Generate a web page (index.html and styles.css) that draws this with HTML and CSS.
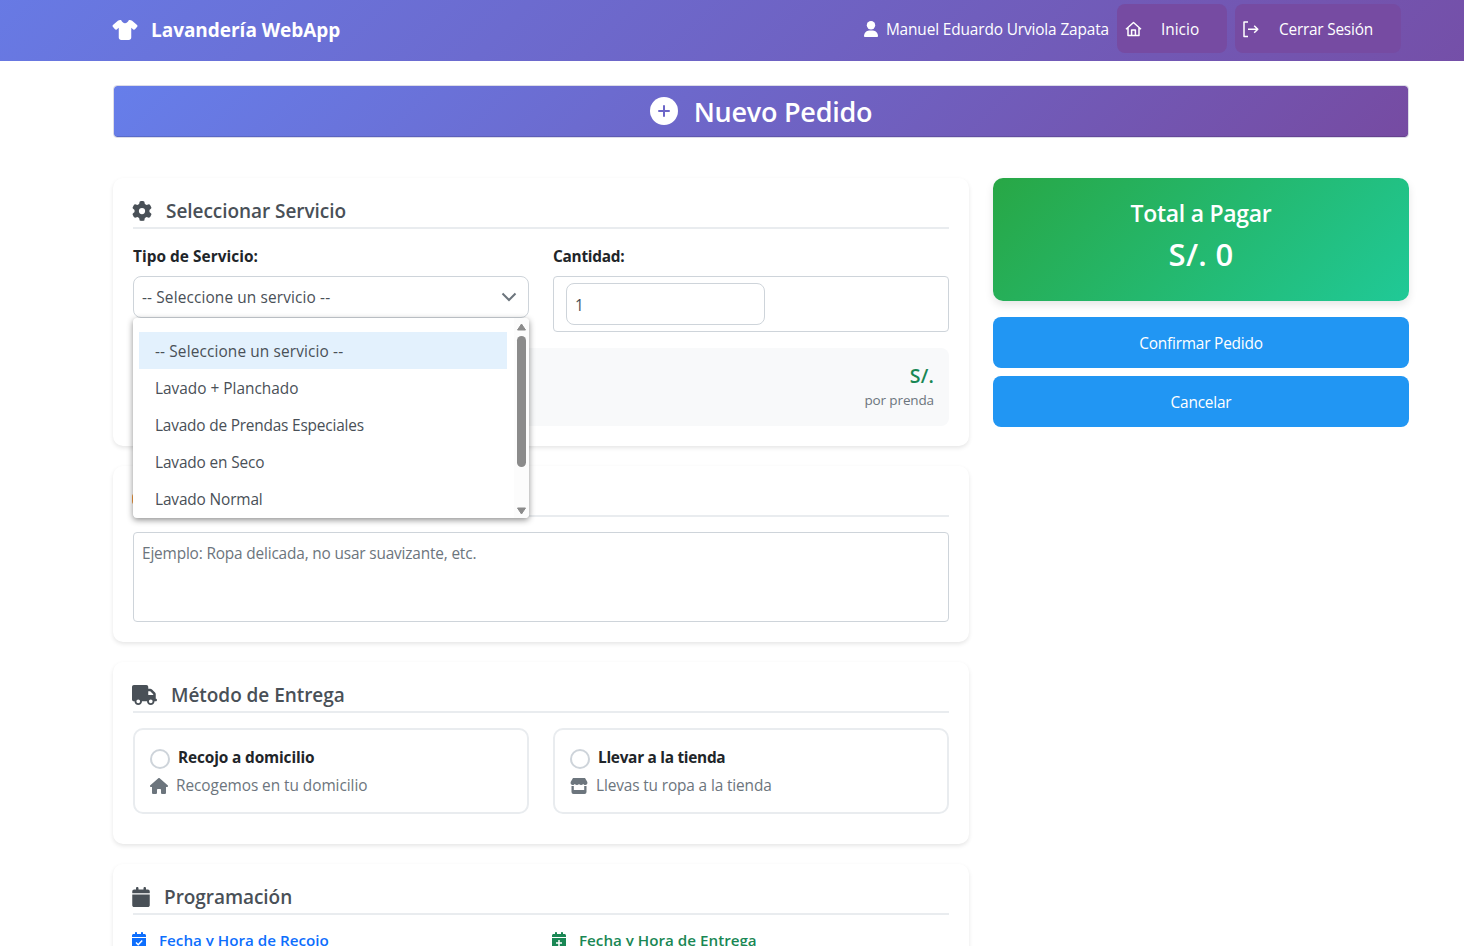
FILE: index.html
```html
<!DOCTYPE html>
<html lang="es">
<head>
<meta charset="utf-8">
<title>Nuevo Pedido - Lavandería WebApp</title>
<link rel="stylesheet" href="styles.css">
</head>
<body>
<svg class="defs" aria-hidden="true">
  <symbol id="calendar" viewBox="0 0 448 512"><path d="M96 32V64H48C21.5 64 0 85.5 0 112v48H448V112c0-26.5-21.5-48-48-48H352V32c0-17.7-14.3-32-32-32s-32 14.3-32 32V64H160V32c0-17.7-14.3-32-32-32S96 14.3 96 32zM448 192H0V464c0 26.5 21.5 48 48 48H400c26.5 0 48-21.5 48-48V192z"/></symbol>
</svg>
<header class="navbar">
  <a class="brand">
    <svg width="26" height="20" viewBox="0 0 640 512"><path d="M211.8 0c7.8 0 14.3 5.7 16.7 13.2C240.8 51.9 277.1 80 320 80s79.2-28.1 91.5-66.8C413.9 5.7 420.4 0 428.2 0h12.6c22.5 0 44.2 7.9 61.5 22.3L628.5 127.4c6.6 5.5 10.7 13.5 11.4 22.1s-2.1 17.1-7.8 23.6l-56 64c-11.4 13.1-31.2 14.6-44.6 3.5L480 197.7V448c0 35.3-28.7 64-64 64H224c-35.3 0-64-28.7-64-64V197.7l-51.5 42.9c-13.3 11.1-33.1 9.6-44.6-3.5l-56-64c-5.7-6.5-8.5-15-7.8-23.6s4.8-16.6 11.4-22.1L137.7 22.3C155 7.9 176.7 0 199.2 0h12.6z"/></svg>
    <span class="t brand-name">Lavandería WebApp</span>
  </a>
  <nav class="nav-right">
    <svg class="user-icon" width="14" height="16" viewBox="0 0 14 16"><circle cx="7" cy="4.2" r="4.2"/><path d="M0.6 15.9C0.2 15.9 0 15.6 0 15.1 0 11.8 2.4 9.6 5 9.4H9C11.600 9.6 14 11.800 14 15.100 14 15.600 13.800 15.900 13.400 15.900Z"/></svg>
    <span class="t user-name">Manuel Eduardo Urviola Zapata</span>
    <a class="nav-btn home">
      <svg width="17" height="16" viewBox="0 0 17 16" class="line"><path d="M1 8.2 8.500 1.500 16 8.200M3 7V14.600H14V7M6.600 14.600V9H10.400V14.600"/></svg>
      <span class="t">Inicio</span>
    </a>
    <a class="nav-btn logout">
      <svg width="17" height="17" viewBox="0 0 17 17" class="line"><path d="M5 1H1V15.600H5M5 8.300H15M11.200 4.800 14.800 8.300 11.200 11.800"/></svg>
      <span class="t">Cerrar Sesión</span>
    </a>
  </nav>
</header>
<main class="page">
  <h1 class="banner">
    <svg width="28" height="28" viewBox="0 0 28 28"><circle cx="14" cy="14" r="14" fill="#fff"/><path d="M14 9V19M9 14H19" stroke="#6c66c8" stroke-width="2" stroke-linecap="round"/></svg>
    <span class="t">Nuevo Pedido</span>
  </h1>
  <div class="columns">
    <div class="main-col">
      <section class="card service">
        <h2 class="title">
          <svg width="20" height="20" viewBox="0 0 512 512"><path d="M495.9 166.6c3.2 8.700 .5 18.400-6.400 24.600l-43.300 39.400c1.100 8.300 1.700 16.800 1.700 25.400s-.6 17.100-1.700 25.400l43.300 39.400c6.900 6.200 9.600 15.900 6.400 24.600c-4.400 11.900-9.700 23.300-15.800 34.300l-4.700 8.100c-6.600 11-14 21.400-22.100 31.200c-5.900 7.200-15.700 9.600-24.500 6.800l-55.700-17.700c-13.400 10.300-28.200 18.900-44 25.400l-12.500 57.100c-2 9.100-9 16.300-18.200 17.800c-13.800 2.300-28 3.500-42.500 3.500s-28.700-1.200-42.500-3.500c-9.200-1.500-16.200-8.700-18.200-17.800l-12.500-57.100c-15.800-6.500-30.600-15.100-44-25.400L83.100 425.900c-8.800 2.800-18.600 .3-24.500-6.800c-8.100-9.800-15.500-20.200-22.100-31.200l-4.700-8.100c-6.100-11-11.400-22.400-15.800-34.300c-3.200-8.700-.5-18.400 6.400-24.600l43.300-39.400C64.600 273.100 64 264.600 64 256s.6-17.100 1.700-25.400L22.400 191.200c-6.900-6.200-9.600-15.900-6.400-24.600c4.400-11.900 9.700-23.300 15.800-34.300l4.700-8.100c6.600-11 14-21.400 22.100-31.200c5.900-7.200 15.700-9.600 24.500-6.800l55.700 17.700c13.400-10.300 28.200-18.900 44-25.400l12.500-57.100c2-9.100 9-16.300 18.200-17.800C227.300 1.200 241.500 0 256 0s28.700 1.200 42.500 3.500c9.200 1.500 16.200 8.700 18.200 17.800l12.500 57.100c15.800 6.500 30.600 15.100 44 25.400l55.700-17.700c8.800-2.800 18.600-.3 24.500 6.800c8.100 9.800 15.500 20.200 22.100 31.200l4.700 8.100c6.100 11 11.400 22.400 15.800 34.300zM256 336a80 80 0 1 0 0-160 80 80 0 1 0 0 160z"/></svg>
          <span class="t">Seleccionar Servicio</span>
        </h2>
        <div class="grid fields">
          <div class="field">
            <label class="label"><span class="t kind">Tipo de Servicio:</span></label>
            <div class="select">
              <span class="t wide">-- Seleccione un servicio --</span>
              <svg class="chevron" width="16" height="10" viewBox="0 0 16 10"><path d="M1.500 1.500 8 8 14.500 1.500" fill="none" stroke="#6c757d" stroke-width="2"/></svg>
              <div class="dropdown">
                <ul class="options">
                  <li class="active"><span class="t wide">-- Seleccione un servicio --</span></li>
                  <li><span class="t plus">Lavado + Planchado</span></li>
                  <li><span class="t special">Lavado de Prendas Especiales</span></li>
                  <li><span class="t">Lavado en Seco</span></li>
                  <li><span class="t">Lavado Normal</span></li>
                </ul>
                <div class="scrollbar">
                  <svg width="10" height="8" viewBox="0 0 10 8"><path d="M5 1 9 7H1Z" stroke="#8b8b8b" stroke-linejoin="round"/></svg>
                  <div class="thumb"></div>
                  <svg width="10" height="8" viewBox="0 0 10 8"><path d="M5 7 9 1H1Z" stroke="#8b8b8b" stroke-linejoin="round"/></svg>
                </div>
              </div>
            </div>
          </div>
          <div class="field">
            <label class="label tight"><span class="t">Cantidad:</span></label>
            <div class="qty"><div class="qty-input"><span class="t">1</span></div></div>
          </div>
        </div>
        <div class="price">
          <div class="price-value"><span class="t">S/.</span></div>
          <div class="price-unit"><span class="t">por prenda</span></div>
        </div>
      </section>
      <section class="card notes">
        <h2 class="title"><svg class="note-icon" width="18" height="12" viewBox="0 0 18 12"><rect width="18" height="12" rx="4"/></svg></h2>
        <div class="textarea"><span class="t">Ejemplo: Ropa delicada, no usar suavizante, etc.</span></div>
      </section>
      <section class="card delivery">
        <h2 class="title">
          <svg width="25" height="20" viewBox="0 0 640 512"><path d="M48 0C21.500 0 0 21.500 0 48V368c0 26.500 21.500 48 48 48H64c0 53 43 96 96 96s96-43 96-96H384c0 53 43 96 96 96s96-43 96-96h32c17.700 0 32-14.300 32-32s-14.300-32-32-32V288 256 237.300c0-17-6.700-33.300-18.700-45.300L512 114.700c-12-12-28.300-18.700-45.300-18.700H416V48c0-26.500-21.500-48-48-48H48zM416 160h50.700L544 237.300V256H416V160zM112 416a48 48 0 1 1 96 0 48 48 0 1 1 -96 0zm368-48a48 48 0 1 1 0 96 48 48 0 1 1 0-96z"/></svg>
          <span class="t">Método de Entrega</span>
        </h2>
        <div class="grid">
          <div class="option">
            <div class="option-head"><i class="radio"></i><span class="t">Recojo a domicilio</span></div>
            <div class="option-sub home-sub">
              <svg width="18" height="16" viewBox="0 0 576 512"><path d="M575.8 255.5c0 18-15 32.100-32 32.100h-32l.7 160.200c0 2.700-.2 5.400-.5 8.100V472c0 22.100-17.900 40-40 40H392c-22.100 0-40-17.900-40-40V384c0-17.700-14.300-32-32-32H256c-17.700 0-32 14.300-32 32v88c0 22.100-17.900 40-40 40H104c-22.100 0-40-17.900-40-40V287.600H32c-18 0-32-14-32-32.100c0-9 3-17 10-24L266.400 8c7-7 15-8 22-8s15 2 21 7L564.800 231.500c8 7 12 15 11 24z"/></svg>
              <span class="t">Recogemos en tu domicilio</span>
            </div>
          </div>
          <div class="option">
            <div class="option-head tight"><i class="radio"></i><span class="t">Llevar a la tienda</span></div>
            <div class="option-sub">
              <svg width="18" height="16" viewBox="0 0 18 16"><path d="M3 0H15L17.200 3.700C18 5.600 16.800 7 15.300 7 14.300 7 13.600 6.500 13.200 6 12.700 6.600 12 7 11.100 7 10.200 7 9.500 6.600 9 6 8.500 6.600 7.800 7 6.900 7 6 7 5.300 6.600 4.800 6 4.400 6.500 3.700 7 2.700 7 1.200 7 0 5.600 .8 3.700ZM1.500 8H3.800V12H14.200V8H16.500V14Q16.500 16 14.500 16H3.500Q1.500 16 1.500 14Z"/></svg>
              <span class="t">Llevas tu ropa a la tienda</span>
            </div>
          </div>
        </div>
      </section>
      <section class="card schedule">
        <h2 class="title">
          <svg width="18" height="20"><use href="#calendar"/></svg>
          <span class="t">Programación</span>
        </h2>
        <div class="grid">
          <h3 class="date pickup">
            <svg width="14" height="16"><use href="#calendar"/><path d="M4 10.500 6.200 12.700 10.200 8.500" fill="none" stroke="#fff" stroke-width="1.500"/></svg>
            <span class="t">Fecha y Hora de Recojo</span>
          </h3>
          <h3 class="date dropoff">
            <svg width="14" height="16"><use href="#calendar"/><path d="M7 8V14M4 11H10" fill="none" stroke="#fff" stroke-width="1.500"/></svg>
            <span class="t">Fecha y Hora de Entrega</span>
          </h3>
        </div>
      </section>
    </div>
    <aside class="side-col">
      <div class="total">
        <div class="total-label"><span class="t">Total a Pagar</span></div>
        <div class="total-value"><span class="t">S/. 0</span></div>
      </div>
      <button class="btn"><span class="t">Confirmar Pedido</span></button>
      <button class="btn"><span class="t">Cancelar</span></button>
    </aside>
  </div>
</main>
</body>
</html>
```
FILE: styles.css
```css
* { box-sizing: border-box; }
html, body { height: 100%; }
body {
  margin: 0;
  overflow: hidden;
  background: #fff;
  color: #212529;
  font: 15.4px/24px "Open Sans", "Noto Sans", sans-serif;
  letter-spacing: -0.13px;
}
h1, h2, h3, ul { margin: 0; padding: 0; font-weight: 600; }
svg { display: block; flex: none; fill: currentColor; }
.defs { display: none; }
.t { white-space: nowrap; }
.wide { letter-spacing: 0.13px; }
.kind { letter-spacing: 0.04px; }
.plus { letter-spacing: 0; }
.special { letter-spacing: -0.19px; }
.tight { letter-spacing: -0.28px; }
.line { fill: none; stroke: currentColor; stroke-width: 1.5; stroke-linejoin: round; }

.navbar {
  height: 61px;
  padding: 0 63px 0 112px;
  display: flex;
  align-items: center;
  justify-content: space-between;
  color: #fff;
  background: linear-gradient(135deg, #667eea -10%, #764ba2 110%);
}
.brand { display: flex; align-items: center; gap: 13px; font-size: 19px; font-weight: 700; letter-spacing: -0.03px; }
.brand svg { margin-bottom: 1px; }
.brand-name { margin-bottom: 2px; }
.nav-right { display: flex; align-items: center; height: 100%; padding-bottom: 5px; }
.user-name { margin: 4px 8px 0; }
.user-icon { margin-top: 2px; }
.nav-btn {
  height: 49px;
  margin-top: 1px;
  padding-left: 8px;
  display: flex;
  align-items: center;
  border-radius: 8px;
  background: #764ba2;
}
.nav-btn .t { margin-top: 2px; }
.nav-btn svg { margin-top: 1px; }
.home { width: 110px; gap: 19px; letter-spacing: 0; }
.logout { width: 166px; margin-left: 8px; gap: 19px; letter-spacing: -0.22px; }

.page { padding: 24px 55px 0 113px; }
.banner {
  height: 53px;
  display: flex;
  align-items: center;
  justify-content: center;
  gap: 16px;
  color: #fff;
  font-size: 27px;
  letter-spacing: -0.25px;
  border: 1px solid #dcdce8;
  border-radius: 4px;
  background: linear-gradient(135deg, #667eea 0%, #764ba2 100%) padding-box;
  box-shadow: inset 0 -1px 0 rgba(0, 0, 0, .13);
}
.banner svg { margin-bottom: 1px; }
.columns { margin-top: 40px; display: grid; grid-template-columns: 856px 416px; gap: 24px; }
.main-col { display: flex; flex-direction: column; gap: 20px; }
.card {
  padding: 20px;
  background: #fff;
  border-radius: 10px;
  box-shadow: 0 2px 4px rgba(0, 0, 0, .1);
}
.title {
  height: 31px;
  margin-bottom: 16px;
  padding-bottom: 3px;
  display: flex;
  align-items: center;
  gap: 14px;
  color: #495057;
  font-size: 19px;
  letter-spacing: -0.05px;
  border-bottom: 2px solid #e9ecef;
}
.title svg { margin: 0 0 1px -1px; }
.grid { display: grid; grid-template-columns: 1fr 1fr; gap: 24px; }
.label { display: block; margin-bottom: 7px; font-weight: 700; }
.select {
  position: relative;
  height: 42px;
  padding: 1px 11px 0 8px;
  display: flex;
  align-items: center;
  justify-content: space-between;
  color: #495057;
  border: 1px solid #ced4da;
  border-radius: 8px;
}
.chevron { margin-bottom: 2px; }
.dropdown {
  position: absolute;
  z-index: 5;
  top: 41px;
  left: -1px;
  width: 396px;
  height: 200px;
  display: flex;
  justify-content: space-between;
  background: #fff;
  border-radius: 4px;
  box-shadow: 0 2px 6px rgba(0, 0, 0, .45);
}
.options { width: 368px; margin: 14px 0 0 6px; list-style: none; font-weight: 400; }
.options li { height: 37px; padding: 8px 16px 5px; line-height: 24px; }
.options .active { background: #e3f1fd; }
.scrollbar {
  width: 15px;
  padding: 5px 2px 3px 2px;
  display: flex;
  flex-direction: column;
  color: #8b8b8b;
  background: #fcfcfc;
  border-radius: 0 4px 4px 0;
}
.scrollbar svg { width: 11px; }
.thumb { width: 9px; height: 131px; margin: 5px 0 auto 1px; border-radius: 5px; background: #8b8b8b; }
.qty { height: 56px; padding: 6px 12px; border: 1px solid #ced4da; border-radius: 4px; }
.qty-input { width: 199px; height: 42px; padding: 10px 8px 7px; color: #495057; border: 1px solid #ced4da; border-radius: 8px; }
.price { height: 78px; margin-top: 16px; padding: 15px; text-align: right; background: #f8f9fa; border-radius: 8px; }
.price-value { height: 26px; color: #198754; font-size: 19.5px; font-weight: 600; line-height: 26px; letter-spacing: 0.2px; }
.price-unit { color: #6c757d; font-size: 13.5px; line-height: 22px; }
.notes .title { margin-bottom: 15px; }
.note-icon { color: #f59a3c; }
.textarea { height: 90px; padding: 9px 8px; color: #6c757d; letter-spacing: -0.17px; border: 1px solid #ced4da; border-radius: 4px; }
.delivery { height: 182px; }
.delivery .title { margin-bottom: 15px; }
.option { height: 86px; padding: 16px 15px 14px; border: 2px solid #e9ecef; border-radius: 10px; }
.option-head { display: flex; gap: 8px; font-weight: 700; }
.radio { width: 20px; height: 20px; margin-top: 3px; border: 2px solid #ced4da; border-radius: 50%; }
.option-sub { margin-top: 4px; display: flex; align-items: center; gap: 8px; color: #6c757d; }
.option-sub svg { margin-bottom: 1px; }
.home-sub { letter-spacing: -0.05px; }
.date { display: flex; align-items: center; gap: 12px; font-size: 15.2px; line-height: 18px; letter-spacing: 0; }
.date svg { margin-left: -1px; margin-right: 1px; }
.pickup { color: #0d6efd; }
.dropoff { color: #198754; }
.side-col { display: flex; flex-direction: column; }
.total {
  height: 123px;
  margin-bottom: 16px;
  padding-top: 19px;
  text-align: center;
  color: #fff;
  font-weight: 600;
  letter-spacing: -0.28px;
  border-radius: 10px;
  background: linear-gradient(135deg, #28a745 0%, #20c997 100%);
  box-shadow: 0 4px 8px rgba(0, 0, 0, .1);
}
.total-label { font-size: 23px; line-height: 32px; }
.total-value { margin-top: 4px; font-size: 31px; line-height: 42px; letter-spacing: 0.3px; }
.btn {
  height: 51px;
  margin-bottom: 8px;
  padding-top: 3px;
  border: 0;
  border-radius: 8px;
  color: #fff;
  background: #2196f3;
  font: inherit;
  letter-spacing: -0.2px;
}
```
